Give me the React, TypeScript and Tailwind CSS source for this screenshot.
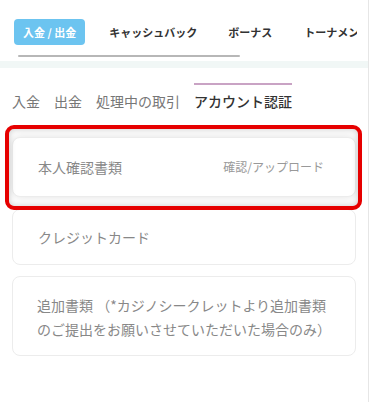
const topTabs = ["キャッシュバック", "ボーナス", "トーナメント"];
const subTabs = ["入金", "出金", "処理中の取引"];

export default function App() {
  return (
    <div className="relative w-[370px] h-[402px] overflow-hidden bg-white font-['Noto_Sans_CJK_JP','Noto_Sans',sans-serif]">
      <div className="w-[369px] h-full border-r border-[#e6e6e6]">
        {/* top category tabs */}
        <div className="w-[357px] overflow-hidden flex items-center pt-[19px] pl-[14px] whitespace-nowrap">
          <div className="shrink-0 h-[26px] px-[9px] flex items-center rounded-[4px] bg-[#6cc4f0] text-white text-[11px] font-bold leading-none">
            入金 / 出金
          </div>
          <span className="shrink-0 ml-[24px] text-[11px] font-bold text-[#333]">{topTabs[0]}</span>
          <span className="shrink-0 ml-[31px] text-[11px] font-bold text-[#333]">{topTabs[1]}</span>
          <span className="shrink-0 ml-[32px] text-[11px] font-bold text-[#333]">{topTabs[2]}</span>
        </div>
        <div className="mt-[10px] ml-[18px] w-[222px] h-[2px] rounded-full bg-[#b7b7b7]" />
        <div className="mt-[4px] h-[7px] bg-[#f1f7f6]" />

        {/* sub tabs */}
        <div className="mt-[15px] flex gap-[14px] pl-[12px] whitespace-nowrap text-[14px] leading-[20px]">
          {subTabs.map((t) => (
            <div key={t} className="border-t-2 border-transparent pt-[6px] text-[#777]">
              {t}
            </div>
          ))}
          <div className="border-t-2 border-[#c9a3c4] pt-[6px] text-[#333] font-medium">
            アカウント認証
          </div>
        </div>

        {/* document cards */}
        <div className="mt-[26px] mx-[12px] flex flex-col">
          <div className="h-[60px] flex items-center justify-between pl-[25px] pr-[31px] rounded-[8px] border border-[#ececec] bg-white shadow-[0_0_8px_rgba(0,0,0,0.12)]">
            <span className="text-[14px] text-[#888]">本人確認書類</span>
            <span className="text-[12px] text-[#999]">確認/アップロード</span>
          </div>
          <div className="mt-[12px] h-[56px] flex items-center pl-[25px] rounded-[8px] border border-[#ececec]">
            <span className="text-[14px] text-[#888]">クレジットカード</span>
          </div>
          <div className="mt-[11px] h-[80px] pt-[16px] pl-[24px] rounded-[8px] border border-[#ececec] text-[14px] leading-[24px] text-[#888] whitespace-nowrap">
            追加書類 （*カジノシークレットより追加書類
            <br />
            のご提出をお願いさせていただいた場合のみ）
          </div>
        </div>
      </div>

      {/* red highlight annotation */}
      <div className="absolute left-[5px] top-[125px] w-[357px] h-[85px] rounded-[9px] border-4 border-[#e60000] shadow-[inset_0_0_6px_rgba(0,0,0,0.22)]" />
    </div>
  );
}
